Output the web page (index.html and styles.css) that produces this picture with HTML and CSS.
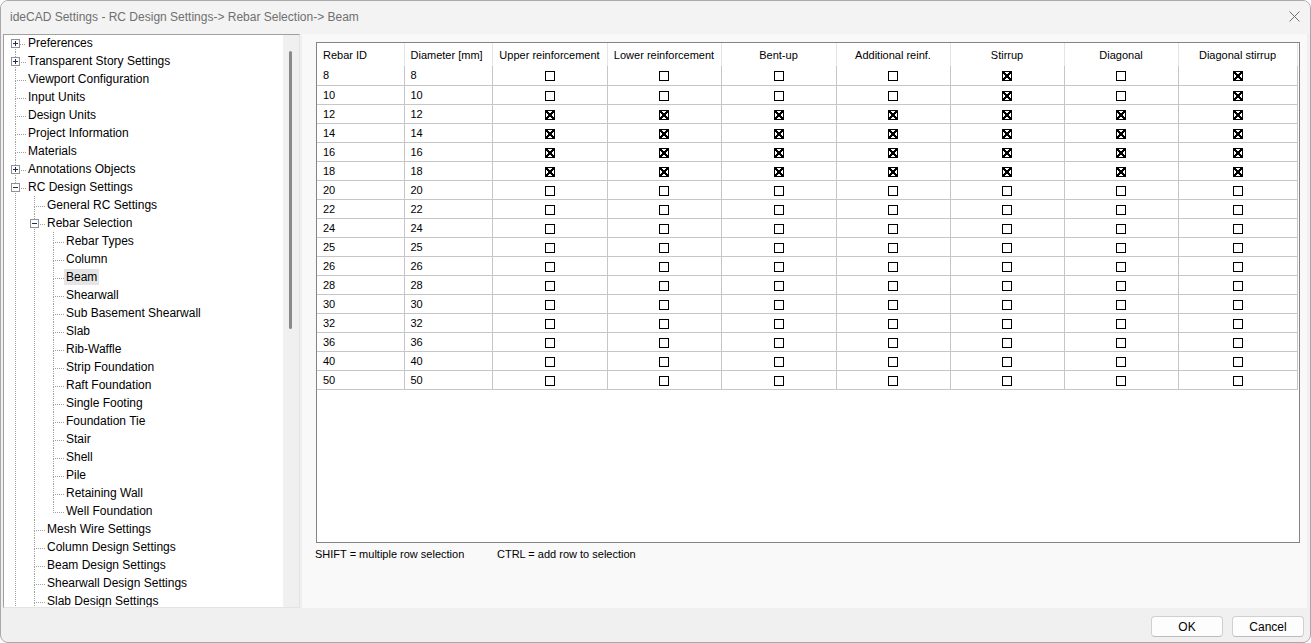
FILE: index.html
```html
<!DOCTYPE html>
<html lang="en">
<head>
  <meta charset="UTF-8">
  <title>ideCAD Settings</title>
  <link rel="stylesheet" href="styles.css">
</head>
<body>
  <div class="window">
    <div class="titlebar">
      <span>ideCAD Settings - RC Design Settings-&gt; Rebar Selection-&gt; Beam</span>
      <svg class="close" width="11" height="11" viewBox="0 0 11 11"><path d="M0.5 0.5L10.5 10.5M10.5 0.5L0.5 10.5" stroke="#6f6f6f" stroke-width="1" fill="none"/></svg>
    </div>

    <div class="main">
      <div class="tree-panel">
        <div class="tree">
          <ul>
            <li><span class="toggle plus"></span><div class="row"><span class="label">Preferences</span></div></li>
            <li><span class="toggle plus"></span><div class="row"><span class="label">Transparent Story Settings</span></div></li>
            <li><div class="row"><span class="label">Viewport Configuration</span></div></li>
            <li><div class="row"><span class="label">Input Units</span></div></li>
            <li><div class="row"><span class="label">Design Units</span></div></li>
            <li><div class="row"><span class="label">Project Information</span></div></li>
            <li><div class="row"><span class="label">Materials</span></div></li>
            <li><span class="toggle plus"></span><div class="row"><span class="label">Annotations Objects</span></div></li>
            <li class="more"><span class="toggle minus"></span><div class="row"><span class="label">RC Design Settings</span></div>
              <ul>
                <li><div class="row"><span class="label">General RC Settings</span></div></li>
                <li><span class="toggle minus"></span><div class="row"><span class="label">Rebar Selection</span></div>
                  <ul>
                    <li><div class="row"><span class="label">Rebar Types</span></div></li>
                    <li><div class="row"><span class="label">Column</span></div></li>
                    <li><div class="row"><span class="label selected">Beam</span></div></li>
                    <li><div class="row"><span class="label">Shearwall</span></div></li>
                    <li><div class="row"><span class="label">Sub Basement Shearwall</span></div></li>
                    <li><div class="row"><span class="label">Slab</span></div></li>
                    <li><div class="row"><span class="label">Rib-Waffle</span></div></li>
                    <li><div class="row"><span class="label">Strip Foundation</span></div></li>
                    <li><div class="row"><span class="label">Raft Foundation</span></div></li>
                    <li><div class="row"><span class="label">Single Footing</span></div></li>
                    <li><div class="row"><span class="label">Foundation Tie</span></div></li>
                    <li><div class="row"><span class="label">Stair</span></div></li>
                    <li><div class="row"><span class="label">Shell</span></div></li>
                    <li><div class="row"><span class="label">Pile</span></div></li>
                    <li><div class="row"><span class="label">Retaining Wall</span></div></li>
                    <li><div class="row"><span class="label">Well Foundation</span></div></li>
                  </ul>
                </li>
                <li><div class="row"><span class="label">Mesh Wire Settings</span></div></li>
                <li><div class="row"><span class="label">Column Design Settings</span></div></li>
                <li><div class="row"><span class="label">Beam Design Settings</span></div></li>
                <li><div class="row"><span class="label">Shearwall Design Settings</span></div></li>
                <li class="more"><div class="row"><span class="label">Slab Design Settings</span></div></li>
              </ul>
            </li>
          </ul>
        </div>
        <div class="scrollbar"><div class="thumb"></div></div>
      </div>

      <div class="content">
        <div class="grid">
          <table>
            <colgroup>
              <col style="width:87px"><col style="width:88px"><col style="width:115px"><col style="width:114px"><col style="width:115px">
              <col style="width:114px"><col style="width:114px"><col style="width:114px"><col style="width:119px">
            </colgroup>
            <thead>
              <tr>
                <th class="l">Rebar ID</th><th class="l">Diameter [mm]</th><th>Upper reinforcement</th><th>Lower reinforcement</th>
                <th>Bent-up</th><th>Additional reinf.</th><th>Stirrup</th><th>Diagonal</th><th>Diagonal stirrup</th>
              </tr>
            </thead>
            <tbody>
              <tr><td class="l">8</td><td class="l">8</td><td><span class="cb"></span></td><td><span class="cb"></span></td><td><span class="cb"></span></td><td><span class="cb"></span></td><td><span class="cb on"></span></td><td><span class="cb"></span></td><td><span class="cb on"></span></td></tr>
              <tr><td class="l">10</td><td class="l">10</td><td><span class="cb"></span></td><td><span class="cb"></span></td><td><span class="cb"></span></td><td><span class="cb"></span></td><td><span class="cb on"></span></td><td><span class="cb"></span></td><td><span class="cb on"></span></td></tr>
              <tr><td class="l">12</td><td class="l">12</td><td><span class="cb on"></span></td><td><span class="cb on"></span></td><td><span class="cb on"></span></td><td><span class="cb on"></span></td><td><span class="cb on"></span></td><td><span class="cb on"></span></td><td><span class="cb on"></span></td></tr>
              <tr><td class="l">14</td><td class="l">14</td><td><span class="cb on"></span></td><td><span class="cb on"></span></td><td><span class="cb on"></span></td><td><span class="cb on"></span></td><td><span class="cb on"></span></td><td><span class="cb on"></span></td><td><span class="cb on"></span></td></tr>
              <tr><td class="l">16</td><td class="l">16</td><td><span class="cb on"></span></td><td><span class="cb on"></span></td><td><span class="cb on"></span></td><td><span class="cb on"></span></td><td><span class="cb on"></span></td><td><span class="cb on"></span></td><td><span class="cb on"></span></td></tr>
              <tr><td class="l">18</td><td class="l">18</td><td><span class="cb on"></span></td><td><span class="cb on"></span></td><td><span class="cb on"></span></td><td><span class="cb on"></span></td><td><span class="cb on"></span></td><td><span class="cb on"></span></td><td><span class="cb on"></span></td></tr>
              <tr><td class="l">20</td><td class="l">20</td><td><span class="cb"></span></td><td><span class="cb"></span></td><td><span class="cb"></span></td><td><span class="cb"></span></td><td><span class="cb"></span></td><td><span class="cb"></span></td><td><span class="cb"></span></td></tr>
              <tr><td class="l">22</td><td class="l">22</td><td><span class="cb"></span></td><td><span class="cb"></span></td><td><span class="cb"></span></td><td><span class="cb"></span></td><td><span class="cb"></span></td><td><span class="cb"></span></td><td><span class="cb"></span></td></tr>
              <tr><td class="l">24</td><td class="l">24</td><td><span class="cb"></span></td><td><span class="cb"></span></td><td><span class="cb"></span></td><td><span class="cb"></span></td><td><span class="cb"></span></td><td><span class="cb"></span></td><td><span class="cb"></span></td></tr>
              <tr><td class="l">25</td><td class="l">25</td><td><span class="cb"></span></td><td><span class="cb"></span></td><td><span class="cb"></span></td><td><span class="cb"></span></td><td><span class="cb"></span></td><td><span class="cb"></span></td><td><span class="cb"></span></td></tr>
              <tr><td class="l">26</td><td class="l">26</td><td><span class="cb"></span></td><td><span class="cb"></span></td><td><span class="cb"></span></td><td><span class="cb"></span></td><td><span class="cb"></span></td><td><span class="cb"></span></td><td><span class="cb"></span></td></tr>
              <tr><td class="l">28</td><td class="l">28</td><td><span class="cb"></span></td><td><span class="cb"></span></td><td><span class="cb"></span></td><td><span class="cb"></span></td><td><span class="cb"></span></td><td><span class="cb"></span></td><td><span class="cb"></span></td></tr>
              <tr><td class="l">30</td><td class="l">30</td><td><span class="cb"></span></td><td><span class="cb"></span></td><td><span class="cb"></span></td><td><span class="cb"></span></td><td><span class="cb"></span></td><td><span class="cb"></span></td><td><span class="cb"></span></td></tr>
              <tr><td class="l">32</td><td class="l">32</td><td><span class="cb"></span></td><td><span class="cb"></span></td><td><span class="cb"></span></td><td><span class="cb"></span></td><td><span class="cb"></span></td><td><span class="cb"></span></td><td><span class="cb"></span></td></tr>
              <tr><td class="l">36</td><td class="l">36</td><td><span class="cb"></span></td><td><span class="cb"></span></td><td><span class="cb"></span></td><td><span class="cb"></span></td><td><span class="cb"></span></td><td><span class="cb"></span></td><td><span class="cb"></span></td></tr>
              <tr><td class="l">40</td><td class="l">40</td><td><span class="cb"></span></td><td><span class="cb"></span></td><td><span class="cb"></span></td><td><span class="cb"></span></td><td><span class="cb"></span></td><td><span class="cb"></span></td><td><span class="cb"></span></td></tr>
              <tr><td class="l">50</td><td class="l">50</td><td><span class="cb"></span></td><td><span class="cb"></span></td><td><span class="cb"></span></td><td><span class="cb"></span></td><td><span class="cb"></span></td><td><span class="cb"></span></td><td><span class="cb"></span></td></tr>
            </tbody>
          </table>
        </div>
        <div class="hint">
          <span class="hint-shift">SHIFT = multiple row selection</span>
          <span>CTRL = add row to selection</span>
        </div>
      </div>
    </div>

    <div class="footer">
      <button class="btn">OK</button>
      <button class="btn">Cancel</button>
    </div>
  </div>
</body>
</html>
```

FILE: styles.css
```css
* {
  box-sizing: border-box;
}
body {
  margin: 0;
  font-family: "Liberation Sans", Arial, sans-serif;
  background: #fff;
}
.window {
  width: 1311px;
  height: 643px;
  border: 1px solid #a9a9a9;
  border-radius: 8px;
  background: #f0f0f0;
  display: flex;
  flex-direction: column;
  overflow: hidden;
}
.titlebar {
  height: 33px;
  flex: none;
  display: flex;
  align-items: center;
  justify-content: space-between;
  padding: 0 10px 2px 9px;
  background: #f3f3f3;
  color: #707070;
  font-size: 12px;
}
.main {
  height: 574px;
  flex: none;
  display: flex;
  gap: 2px;
  padding: 0 3px 0 2px;
}

/* tree */
.tree-panel {
  width: 297px;
  flex: none;
  display: flex;
  background: #fff;
  border: 1px solid #a0a0a0;
  border-right-color: #e3e3e3;
  border-bottom-color: #e3e3e3;
}
.tree {
  flex: 1;
  overflow: hidden;
  padding-left: 11px;
  font-size: 12px;
  color: #000;
}
.tree ul {
  list-style: none;
  margin: 0 0 0 8px;
  padding: 0;
}
.tree > ul {
  margin: -1px 0 0 0;
}
.tree li {
  position: relative;
  padding-left: 11px;
}
.tree li::before {
  content: "";
  position: absolute;
  left: 0;
  top: 0;
  width: 10px;
  height: 10px;
  border-left: 1px dotted #a0a0a0;
  border-bottom: 1px dotted #a0a0a0;
}
.tree li::after {
  content: "";
  position: absolute;
  left: 0;
  top: 10px;
  bottom: 0;
  border-left: 1px dotted #a0a0a0;
}
.tree li:last-child::after {
  display: none;
}
.tree li.more:last-child::after {
  display: block;
  bottom: -40px;
}
.tree > ul > li:first-child::before {
  border-left: none;
}
.row {
  height: 18px;
  display: flex;
  align-items: center;
  white-space: nowrap;
}
.label {
  padding: 0 2px;
  line-height: 16px;
}
.label.selected {
  background: #e5e5e5;
}
.toggle {
  position: absolute;
  left: -4px;
  top: 5px;
  width: 9px;
  height: 9px;
  border: 1px solid #919191;
  background: #fff;
  z-index: 1;
}
.toggle::before,
.toggle.plus::after {
  content: "";
  position: absolute;
  background: #1f2f4f;
}
.toggle::before {
  left: 1px;
  top: 3px;
  width: 5px;
  height: 1px;
}
.toggle.plus::after {
  left: 3px;
  top: 1px;
  width: 1px;
  height: 5px;
}
.scrollbar {
  width: 16px;
  flex: none;
  background: #f0f0f0;
  padding: 16px 0 0 6px;
}
.thumb {
  width: 3px;
  height: 278px;
  border-radius: 2px;
  background: #8a8a8a;
}

/* grid */
.content {
  flex: 1;
  background: #f9f9f9;
  padding: 8px 7px 0 14px;
}
.grid {
  height: 501px;
  border: 1px solid #848484;
  background: #fff;
  overflow: hidden;
}
table {
  border-collapse: collapse;
  table-layout: fixed;
  width: 980px;
  font-size: 11px;
  color: #000;
}
th {
  height: 23px;
  font-weight: normal;
  padding: 0 6px;
  text-align: center;
  border-right: 1px solid #e5e5e5;
  white-space: nowrap;
}
td {
  height: 19px;
  padding: 0 6px;
  text-align: center;
  border-right: 1px solid #c6c6c6;
  border-bottom: 1px solid #c6c6c6;
}
th.l,
td.l {
  text-align: left;
}
.cb {
  display: inline-block;
  width: 10px;
  height: 10px;
  border: 1px solid #000;
  background: #fff;
  vertical-align: middle;
}
.cb.on {
  background:
    linear-gradient(45deg, transparent 38%, #000 38%, #000 62%, transparent 62%),
    linear-gradient(-45deg, transparent 38%, #000 38%, #000 62%, transparent 62%),
    #fff;
}
.hint {
  display: flex;
  font-size: 11px;
  margin: 5px 0 0 -1px;
}
.hint-shift {
  width: 182px;
}

/* footer */
.footer {
  height: 34px;
  flex: none;
  display: flex;
  justify-content: flex-end;
  align-items: flex-start;
  gap: 9px;
  padding: 8px 6px 0 0;
}
.btn {
  width: 72px;
  height: 21px;
  border: 1px solid #d0d0d0;
  border-bottom-color: #bcbcbc;
  border-radius: 4px;
  background: #fdfdfd;
  font-family: "Liberation Sans", Arial, sans-serif;
  font-size: 12px;
  color: #000;
  padding: 0;
}
```
